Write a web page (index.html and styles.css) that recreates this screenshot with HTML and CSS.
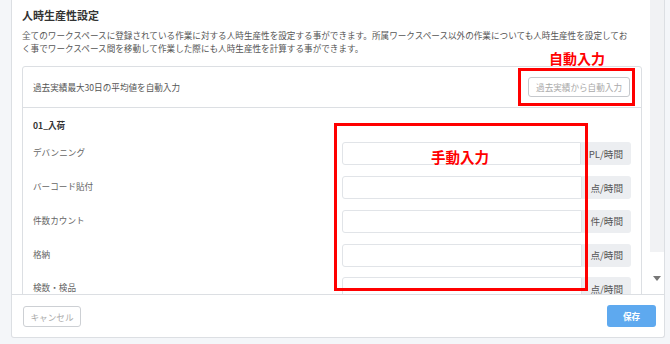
FILE: index.html
```html
<!DOCTYPE html>
<html lang="ja">
<head>
<meta charset="utf-8">
<title>人時生産性設定</title>
<link rel="stylesheet" href="styles.css">
</head>
<body>
<div class="modal">
  <div class="modal-body">
    <div class="scroll-content">
      <h2 class="title">人時生産性設定</h2>
      <p class="desc">全てのワークスペースに登録されている作業に対する人時生産性を設定する事ができます。所属ワークスペース以外の作業についても人時生産性を設定してお<br>く事でワークスペース間を移動して作業した際にも人時生産性を計算する事ができます。</p>
      <div class="card">
        <div class="card-head">
          <span class="head-text">過去実績最大30日の平均値を自動入力</span>
          <button class="btn-auto">過去実績から自動入力</button>
        </div>
        <div class="card-body">
          <div class="group-title">01_入荷</div>
          <div class="row">
            <span class="label">デバンニング</span>
            <div class="input-group"><div class="input"></div><span class="addon">PL/時間</span></div>
          </div>
          <div class="row">
            <span class="label">バーコード貼付</span>
            <div class="input-group"><div class="input"></div><span class="addon">点/時間</span></div>
          </div>
          <div class="row">
            <span class="label">件数カウント</span>
            <div class="input-group"><div class="input"></div><span class="addon">件/時間</span></div>
          </div>
          <div class="row">
            <span class="label">格納</span>
            <div class="input-group"><div class="input"></div><span class="addon">点/時間</span></div>
          </div>
          <div class="row">
            <span class="label">検数・検品</span>
            <div class="input-group"><div class="input"></div><span class="addon">点/時間</span></div>
          </div>
        </div>
      </div>
    </div>
    <div class="scrollbar">
      <div class="thumb"></div>
      <div class="arrow-btn"><span class="arrow"></span></div>
    </div>
  </div>
  <div class="footer">
    <button class="btn-cancel">キャンセル</button>
    <button class="btn-save">保存</button>
  </div>
  <div class="note-box note-auto"></div>
  <div class="note-text note-auto-text">自動入力</div>
  <div class="note-box note-manual"></div>
  <div class="note-text note-manual-text">手動入力</div>
</div>
</body>
</html>
```
FILE: styles.css
```css
* { box-sizing: border-box; }
html, body { margin: 0; padding: 0; }
body {
  background: #f4f6f9;
  font-family: "Noto Sans CJK JP", "Noto Sans", sans-serif;
  width: 670px;
  height: 344px;
  overflow: hidden;
}
.modal {
  position: relative;
  margin-left: 11px;
  width: 654px;
  height: 338px;
  background: #fff;
  border: 1px solid #dcdfe3;
  border-top: none;
  border-radius: 0 0 3px 3px;
  display: flex;
  flex-direction: column;
}
.modal-body {
  height: 294px;
  display: flex;
  overflow: hidden;
}
.scroll-content {
  flex: 1;
  padding: 0 8px 0 10px;
  overflow: hidden;
}
.title {
  margin: 8px 0 0;
  font-size: 11px;
  line-height: 14px;
  font-weight: 700;
  color: #333;
}
.desc {
  margin: 6.5px 0 0;
  font-size: 8.6px;
  line-height: 13px;
  color: #555;
  white-space: nowrap;
}
.card {
  margin-top: 11px;
  border: 1px solid #dcdfe3;
  border-radius: 3px;
}
.card-head {
  height: 41px;
  border-bottom: 1px solid #dcdfe3;
  display: flex;
  align-items: center;
  justify-content: space-between;
  padding: 0 11px 0 10px;
}
.head-text {
  font-size: 8.6px;
  color: #555;
}
.btn-auto {
  height: 20.5px;
  padding: 0 7px;
  border: 1px solid #c6c9cd;
  border-radius: 3px;
  background: #fff;
  color: #a9a9a9;
  font-family: inherit;
  font-size: 8.6px;
  margin-top: 1px;
}
.card-body {
  padding: 11px 10px 0 10px;
}
.group-title {
  font-size: 8.6px;
  line-height: 12px;
  font-weight: 700;
  color: #333;
  margin-bottom: 11.8px;
}
.row {
  height: 23px;
  margin-bottom: 10.75px;
  display: flex;
  align-items: center;
  justify-content: space-between;
}
.label {
  font-size: 8.6px;
  color: #666;
  margin-top: -3px;
}
.input-group {
  width: 289.5px;
  height: 23px;
  display: flex;
}
.input {
  flex: 1;
  border: 1px solid #e1e4e8;
  border-radius: 3px 0 0 3px;
  background: #fff;
}
.addon {
  display: flex;
  align-items: center;
  padding: 0 8px;
  background: #eceef1;
  border-radius: 0 3px 3px 0;
  font-size: 9.6px;
  color: #555;
}
.scrollbar {
  width: 14px;
  display: flex;
  flex-direction: column;
}
.thumb {
  flex: 1;
  background: #f1f2f4;
  margin-bottom: 24px;
}
.arrow-btn {
  height: 18px;
  display: flex;
  justify-content: center;
  align-items: flex-start;
}
.arrow {
  width: 0;
  height: 0;
  border-left: 4px solid transparent;
  border-right: 4px solid transparent;
  border-top: 5px solid #777;
}
.footer {
  flex: 1;
  border-top: 1px solid #dcdfe3;
  display: flex;
  justify-content: space-between;
  align-items: flex-start;
  padding: 11px 8px 0 11px;
}
.btn-cancel {
  width: 58px;
  height: 21px;
  border: 1px solid #cdd0d4;
  border-radius: 3px;
  background: #fff;
  color: #aaa;
  font-family: inherit;
  font-size: 8.6px;
  padding: 0;
}
.btn-save {
  width: 49px;
  height: 22px;
  margin-top: -1px;
  border: none;
  border-radius: 3px;
  background: #5ea9ef;
  color: #fff;
  font-family: inherit;
  font-size: 8.6px;
  font-weight: 700;
  padding: 0;
}
.note-box {
  position: absolute;
  border: 3px solid #ff0000;
}
.note-auto {
  left: 505.5px;
  top: 68px;
  width: 117px;
  height: 37.5px;
}
.note-manual {
  left: 322.3px;
  top: 123.3px;
  width: 253.5px;
  height: 168px;
}
.note-text {
  position: absolute;
  color: #ff0000;
  font-weight: 700;
  font-size: 14px;
  line-height: 14px;
  white-space: nowrap;
}
.note-auto-text {
  left: 537px;
  top: 51px;
}
.note-manual-text {
  left: 419px;
  top: 150px;
  font-size: 14.5px;
}
```
